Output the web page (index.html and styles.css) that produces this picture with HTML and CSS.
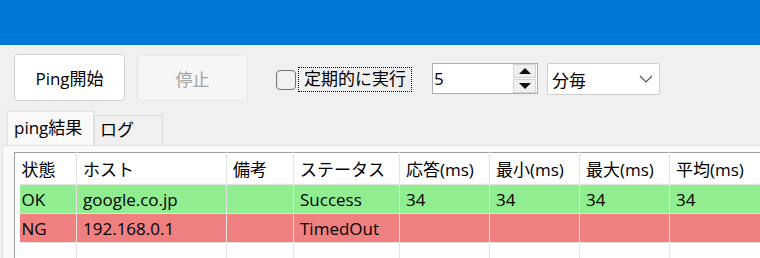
FILE: index.html
```html
<!DOCTYPE html>
<html lang="ja">

<head>
    <meta charset="UTF-8">
    <meta name="viewport" content="width=device-width, initial-scale=1.0">
    <title>Ping</title>
    <link rel="stylesheet" href="styles.css">
</head>

<body>
    <div class="titlebar"></div>

    <div class="toolbar">
        <button class="btn">Ping開始</button>
        <button class="btn" disabled>停止</button>
        <label class="check">
            <span class="check-box"></span>
            <span class="check-label">定期的に実行</span>
        </label>
        <div class="spin">
            <span class="spin-value">5</span>
            <div class="spin-buttons">
                <span class="spin-btn"><span class="arrow-up"></span></span>
                <span class="spin-btn"><span class="arrow-down"></span></span>
            </div>
        </div>
        <div class="select">
            <span>分毎</span>
            <svg width="14" height="8" viewBox="0 0 14 8">
                <polyline points="1,1 7,7 13,1" fill="none" stroke="#555" stroke-width="1.2" />
            </svg>
        </div>
    </div>

    <div class="tabs">
        <div class="tab active">ping結果</div>
        <div class="tab">ログ</div>
    </div>

    <div class="tab-page">
        <table class="grid">
            <colgroup>
                <col style="width: 5px">
                <col style="width: 57px">
                <col style="width: 150px">
                <col style="width: 67px">
                <col style="width: 106px">
                <col style="width: 90px">
                <col style="width: 90px">
                <col style="width: 90px">
                <col style="width: 120px">
            </colgroup>
            <thead>
                <tr>
                    <th class="rowhead"></th>
                    <th class="first">状態</th>
                    <th>ホスト</th>
                    <th>備考</th>
                    <th>ステータス</th>
                    <th>応答(ms)</th>
                    <th>最小(ms)</th>
                    <th>最大(ms)</th>
                    <th>平均(ms)</th>
                </tr>
            </thead>
            <tbody>
                <tr class="ok">
                    <td class="rowhead"></td>
                    <td class="first">OK</td>
                    <td>google.co.jp</td>
                    <td></td>
                    <td>Success</td>
                    <td>34</td>
                    <td>34</td>
                    <td>34</td>
                    <td>34</td>
                </tr>
                <tr class="ng">
                    <td class="rowhead"></td>
                    <td class="first">NG</td>
                    <td>192.168.0.1</td>
                    <td></td>
                    <td>TimedOut</td>
                    <td></td>
                    <td></td>
                    <td></td>
                    <td></td>
                </tr>
                <tr class="empty">
                    <td class="rowhead"></td>
                    <td></td>
                    <td></td>
                    <td></td>
                    <td></td>
                    <td></td>
                    <td></td>
                    <td></td>
                    <td></td>
                </tr>
            </tbody>
        </table>
    </div>
</body>

</html>
```

FILE: styles.css
```css
body {
    margin: 0;
    background-color: #f0f0f0;
    color: #000;
    font-family: 'Open Sans', 'Noto Sans CJK JP', sans-serif;
    font-size: 17px;
    overflow: hidden;
    height: 258px;
}

.titlebar {
    height: 45px;
    background-color: #0078d7;
}

/* top controls */
.toolbar {
    display: flex;
    align-items: center;
    padding: 9px 0 0 14px;
    height: 47px;
}

.btn {
    width: 111px;
    height: 47px;
    background-color: #fff;
    border: 1px solid #d0d0d0;
    border-radius: 4px;
    font-family: inherit;
    font-size: 17px;
    color: #000;
    padding: 0;
    margin-right: 12px;
}

.btn:disabled {
    background-color: #f6f6f6;
    border-color: #e6e6e6;
    color: #a3a3a3;
    height: 46px;
    margin-top: 1px;
}

.check {
    display: flex;
    align-items: center;
    margin-left: 16px;
    margin-top: 4px;
}

.check-box {
    width: 18px;
    height: 18px;
    border: 1px solid #6b776b;
    border-radius: 4px;
    background-color: #f0f0f0;
}

.check-label {
    margin-left: 2px;
    padding: 0 5px;
    height: 23px;
    line-height: 22px;
    border: 1px dotted #000;
}

.spin {
    display: flex;
    align-items: center;
    margin-left: 20px;
    width: 104px;
    height: 29px;
    border: 1px solid #adadad;
    background-color: #fff;
    margin-top: 2px;
}

.spin-value {
    flex: 1;
    padding-left: 1px;
}

.spin-buttons {
    display: flex;
    flex-direction: column;
    gap: 1px;
    margin-right: 1px;
}

.spin-btn {
    display: flex;
    align-items: center;
    justify-content: center;
    width: 21px;
    height: 12px;
    background-color: #f0f0f0;
    border: 1px solid #d5d5d5;
}

.arrow-up {
    border-left: 6px solid transparent;
    border-right: 6px solid transparent;
    border-bottom: 6px solid #111;
}

.arrow-down {
    border-left: 6px solid transparent;
    border-right: 6px solid transparent;
    border-top: 6px solid #111;
}

.select {
    display: flex;
    align-items: center;
    justify-content: space-between;
    margin-left: 9px;
    width: 101px;
    height: 30px;
    padding: 0 6px 0 4px;
    border: 1px solid #d0d0d0;
    border-radius: 2px;
    background-color: #fff;
    margin-top: 3px;
}

/* tabs */
.tabs {
    display: flex;
    align-items: flex-end;
    margin: 11px 0 0 7px;
    height: 33px;
}

.tab {
    height: 29px;
    line-height: 28px;
    padding: 0 5px;
    border: 1px solid #dadada;
    border-bottom: none;
    background-color: #f0f0f0;
    width: 57px;
}

.tab.active {
    height: 33px;
    line-height: 32px;
    width: 73px;
    padding: 0 6px;
    background-color: #f9f9f9;
    border-color: #e2e2e2;
}

.tab-page {
    margin-left: 2px;
    border-left: 1px solid #e2e2e2;
    border-top: 1px solid #e2e2e2;
    background-color: #f9f9f9;
    padding: 6px 0 0 11px;
    height: 106px;
    overflow: hidden;
}

/* data grid */
.grid {
    table-layout: fixed;
    border-collapse: collapse;
    width: 775px;
    background-color: #fff;
    border-left: 1px solid #a0a0a0;
    border-top: 1px solid #a0a0a0;
}

.grid th,
.grid td {
    font-weight: normal;
    text-align: left;
    padding: 0 0 0 6px;
    border-right: 1px solid #e3e3e3;
    border-bottom: 1px solid #e3e3e3;
    white-space: nowrap;
    overflow: hidden;
}

.grid th {
    height: 31px;
}

.grid td {
    height: 28px;
}

.grid .rowhead {
    padding: 0;
    border-right: none;
    border-bottom: none;
    background-color: #fff;
}

.grid .first {
    padding-left: 2px;
}

.grid tr.ok td {
    background-color: #90ee90;
}

.grid tr.ng td {
    background-color: #f08080;
}

.grid tr.ok td.rowhead,
.grid tr.ng td.rowhead {
    background-color: #fff;
}

.grid tr.empty td {
    height: 16px;
}
```
